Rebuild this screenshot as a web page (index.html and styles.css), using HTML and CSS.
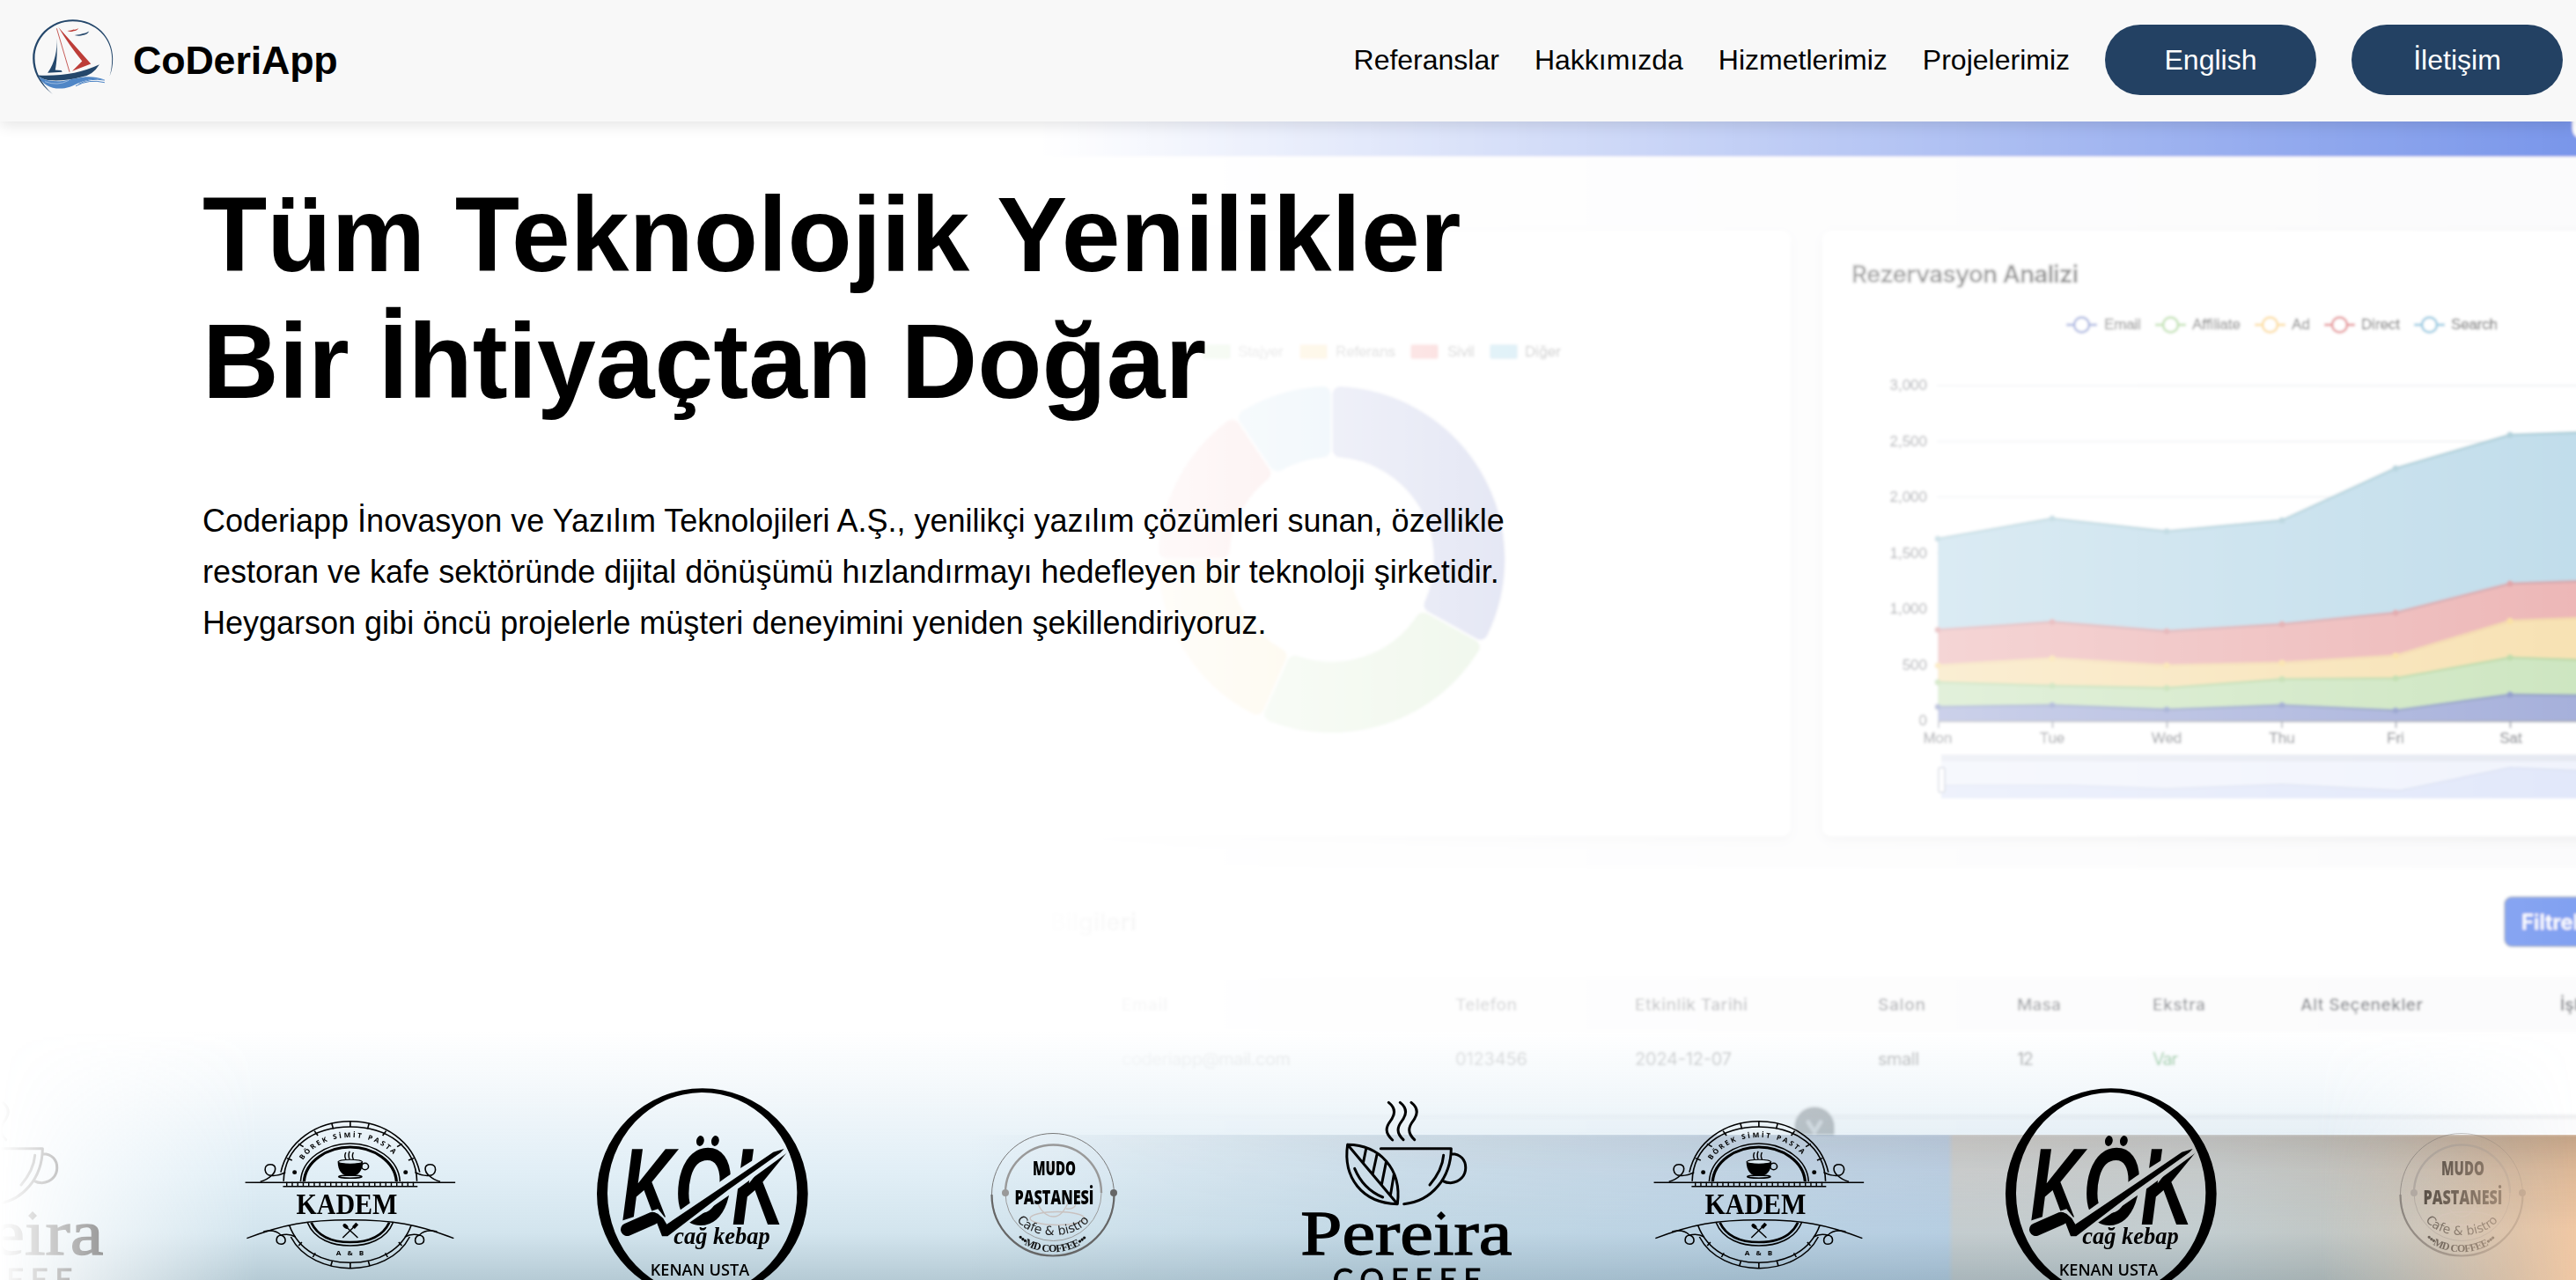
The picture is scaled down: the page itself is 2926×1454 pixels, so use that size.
FILE: index.html
```html
<!DOCTYPE html>
<html lang="tr">
<head>
<meta charset="utf-8">
<title>CoDeriApp</title>
<link rel="stylesheet" href="styles.css">
</head>
<body>
<header class="header">
  <a class="brand">
    <svg class="brand-logo" viewBox="0 0 282 262">
      <path d="M71 259C20 220 3 175 3 137C3 65 62 4 140 4C220 4 277 65 277 137C277 160 274 178 266 197C272 178 274 160 274 137C274 68 218 10 140 10C68 10 10 66 10 137C10 175 28 220 71 259Z" fill="#24476b"/>
      <path d="M86 68C86 110 80 150 54 186L104 183L101 178L80 176C86 150 87 110 86 68Z" fill="#24476b"/>
      <path d="M91 30L202 155L138 180L172 146Q128 92 91 30Z" fill="#bd3d38"/>
      <path d="M85 34L129 183" stroke="#bd3d38" stroke-width="2.5"/>
      <path d="M121 42Q136 42 143 38Q150 40 160 33Q153 43 143 43Q134 48 121 42Z" fill="#bd3d38"/>
      <path d="M146 57Q165 55 173 52Q183 52 196 44Q188 57 174 57Q162 62 146 57Z" fill="#24476b"/>
      <path d="M20 194Q140 200 231 157Q208 196 166 201Q110 216 55 211Q32 207 20 194Z" fill="#24476b"/>
      <path d="M24 200Q60 218 105 214C160 205 190 190 249 209C190 200 160 222 130 234C80 250 40 230 24 200Z" fill="#4f86c6"/>
      <path d="M150 231Q195 206 249 219M160 224Q200 202 249 211" fill="none" stroke="#4f86c6" stroke-width="3"/>
      <path d="M45 216Q88 232 126 212" fill="none" stroke="#e4edf6" stroke-width="1.5"/>
    </svg>
    <span class="brand-name">CoDeriApp</span>
  </a>
  <nav class="nav">
    <a>Referanslar</a>
    <a>Hakkımızda</a>
    <a>Hizmetlerimiz</a>
    <a>Projelerimiz</a>
    <a class="pill">English</a>
    <a class="pill">İletişim</a>
  </nav>
</header>

<main class="hero">
  <svg class="backdrop" viewBox="0 138 2926 1316" preserveAspectRatio="none">
    <defs>
      <linearGradient id="fade" gradientUnits="userSpaceOnUse" x1="1180" x2="2926" y1="0" y2="0">
        <stop offset="0" stop-color="#fff" stop-opacity="0"/>
        <stop offset="1" stop-color="#fff" stop-opacity=".7"/>
      </linearGradient>
      <mask id="fadeMask" maskUnits="userSpaceOnUse" x="0" y="138" width="2926" height="1316">
        <rect x="1180" y="138" width="1746" height="1316" fill="url(#fade)"/>
      </mask>
      <linearGradient id="photo" gradientUnits="userSpaceOnUse" x1="1100" x2="2926" y1="0" y2="0">
        <stop offset="0" stop-color="#e3e9ef" stop-opacity="0"/>
        <stop offset=".27" stop-color="#e6ecf2"/>
        <stop offset=".5" stop-color="#dbe3ef"/>
        <stop offset=".609" stop-color="#d6deed"/>
        <stop offset=".613" stop-color="#eadcd2"/>
        <stop offset=".77" stop-color="#e8ddd3"/>
        <stop offset=".88" stop-color="#e3d0be"/>
        <stop offset=".96" stop-color="#e8c7a9"/>
        <stop offset="1" stop-color="#f0c8a4"/>
      </linearGradient>
      <linearGradient id="shade" x1="0" x2="0" y1="0" y2="1">
        <stop offset="0" stop-color="#2b2320" stop-opacity=".32"/>
        <stop offset=".25" stop-color="#2b2320" stop-opacity=".13"/>
        <stop offset=".65" stop-color="#2b2320" stop-opacity="0"/>
      </linearGradient>
      <filter id="soft" filterUnits="userSpaceOnUse" x="1100" y="100" width="1900" height="1250"><feGaussianBlur stdDeviation="1.4"/></filter>
    </defs>
    <path d="M1100 1289H2926V1454H1100Z" fill="url(#photo)"/>
    <g mask="url(#fadeMask)">
      <rect x="1180" y="1289" width="1746" height="165" fill="url(#shade)"/>
      <g filter="url(#soft)">
        <rect x="1100" y="100" width="1900" height="1189" fill="#f9f9fa"/>
        <rect x="1100" y="100" width="1900" height="78" fill="#4169e1"/>
        <rect x="2922" y="110" width="60" height="48" rx="12" fill="#fff"/>
        <g class="card-shadow">
          <rect x="1100" y="262" width="934" height="688" rx="10" fill="#fff"/>
          <rect x="2070" y="262" width="930" height="688" rx="10" fill="#fff"/>
        </g>
        <rect x="1100" y="986" width="1900" height="281" fill="#fff"/>
        <g stroke-width="18" stroke-linejoin="round" transform="translate(-2 0)">
          <path d="M1524.3 447.8A188 188 0 0 1 1683.5 717.9L1628.3 687.1A125 125 0 0 0 1524.5 510.9Z" fill="#848fcd" stroke="#848fcd"/>
          <path d="M1673.9 735.1A188 188 0 0 1 1447.1 811L1473 753.4A125 125 0 0 0 1618.6 704.7Z" fill="#b8dba6" stroke="#b8dba6"/>
          <path d="M1429.1 803A188 188 0 0 1 1326.8 645.3L1389.9 645.5A125 125 0 0 0 1454.7 745.3Z" fill="#f7d588" stroke="#f7d588"/>
          <path d="M1326.8 625.7A188 188 0 0 1 1401.4 485.4L1436.5 537.8A125 125 0 0 0 1389.9 625.5Z" fill="#ec9090" stroke="#ec9090"/>
          <path d="M1417.7 474.3A188 188 0 0 1 1504.7 447.8L1504.5 510.9A125 125 0 0 0 1453.1 526.6Z" fill="#9ecbe5" stroke="#9ecbe5"/>
        </g>
        <rect x="1366" y="391" width="32" height="17" rx="3" fill="#91cc75"/>
        <rect x="1476" y="391" width="32" height="17" rx="3" fill="#fac858"/>
        <rect x="1602" y="391" width="32" height="17" rx="3" fill="#ee6666"/>
        <rect x="1692" y="391" width="32" height="17" rx="3" fill="#73c0de"/>
        <g class="chart-text">
          <text x="1406" y="405" textLength="52">Stajyer</text>
          <text x="1517" y="405" textLength="68">Referans</text>
          <text x="1644" y="405" textLength="31">Sivil</text>
          <text x="1732" y="405" textLength="41">Diğer</text>
        </g>

        <text class="card-title" x="2103" y="321" textLength="258">Rezervasyon Analizi</text>
        <g fill="#fff" stroke-width="3">
          <path d="M2347 369h35" stroke="#5470c6"/><circle cx="2364.5" cy="369" r="8.5" stroke="#5470c6"/>
          <path d="M2448 369h35" stroke="#91cc75"/><circle cx="2465.5" cy="369" r="8.5" stroke="#91cc75"/>
          <path d="M2561 369h35" stroke="#fac858"/><circle cx="2578.5" cy="369" r="8.5" stroke="#fac858"/>
          <path d="M2640 369h35" stroke="#d84f55"/><circle cx="2657.5" cy="369" r="8.5" stroke="#d84f55"/>
          <path d="M2742 369h35" stroke="#62b2d4"/><circle cx="2759.5" cy="369" r="8.5" stroke="#62b2d4"/>
        </g>
        <g class="chart-text">
          <text x="2390" y="374" textLength="42">Email</text>
          <text x="2490" y="374" textLength="55">Affiliate</text>
          <text x="2603" y="374" textLength="21">Ad</text>
          <text x="2682" y="374" textLength="44">Direct</text>
          <text x="2784" y="374" textLength="53">Search</text>
        </g>
        <path d="M2200 438H2940M2200 501.500H2940M2200 564.500H2940M2200 628H2940" stroke="#e9ebf0" stroke-width="2"/>
        <g class="axis-text axis-y">
          <text x="2189" y="443">3,000</text>
          <text x="2189" y="507">2,500</text>
          <text x="2189" y="570">2,000</text>
          <text x="2189" y="634">1,500</text>
          <text x="2189" y="697">1,000</text>
          <text x="2189" y="761">500</text>
          <text x="2189" y="824">0</text>
        </g>
        <g stroke-width="3">
          <path d="M2201 819V612L2331 589L2461 603.500L2592 591L2721 532L2851 494L2940 491V819Z" fill="#a6cee2"/>
          <path d="M2201 612L2331 589L2461 603.500L2592 591L2721 532L2851 494L2940 491" fill="none" stroke="#8dbccb"/>
          <path d="M2201 819V715.500L2331 706.500L2461 717L2592 709L2721 696L2851 663L2940 660V819Z" fill="#e59898"/>
          <path d="M2201 715.500L2331 706.500L2461 717L2592 709L2721 696L2851 663L2940 660" fill="none" stroke="#c4848c"/>
          <path d="M2201 819V756L2331 748L2461 756L2592 753L2721 745L2851 705.500L2940 702V819Z" fill="#f4d593"/>
          <path d="M2201 756L2331 748L2461 756L2592 753L2721 745L2851 705.500L2940 702" fill="none" stroke="#efc98a"/>
          <path d="M2201 819V775L2331 779L2461 781.600L2592 771.500L2721 770.600L2851 747L2940 750V819Z" fill="#b8dba6"/>
          <path d="M2201 775L2331 779L2461 781.600L2592 771.500L2721 770.600L2851 747L2940 750" fill="none" stroke="#a5cb87"/>
          <path d="M2201 819V803L2331 801L2461 806L2592 801L2721 807L2851 789L2940 790V819Z" fill="#808ecb"/>
          <path d="M2201 803L2331 801L2461 806L2592 801L2721 807L2851 789L2940 790" fill="none" stroke="#6a7fae"/>
        </g>
        <g fill="none">
          <path d="M2201 612h.1M2331 589h.1M2461 603.500h.1M2592 591h.1M2721 532h.1M2851 494h.1" stroke="#8dbccb" class="dots"/>
          <path d="M2201 715.500h.1M2331 706.500h.1M2461 717h.1M2592 709h.1M2721 696h.1M2851 663h.1" stroke="#d07a80" class="dots"/>
          <path d="M2201 756h.1M2331 748h.1M2461 756h.1M2592 753h.1M2721 745h.1M2851 705.500h.1" stroke="#f7d27a" class="dots"/>
          <path d="M2201 775h.1M2331 779h.1M2461 781.600h.1M2592 771.500h.1M2721 770.600h.1M2851 747h.1" stroke="#a0cc84" class="dots"/>
          <path d="M2201 803h.1M2331 801h.1M2461 806h.1M2592 801h.1M2721 807h.1M2851 789h.1" stroke="#6274b4" class="dots"/>
        </g>
        <path d="M2201 819.500H2940M2202 819v8M2331.500 819v8M2461.500 819v8M2592 819v8M2721.500 819v8M2851.500 819v8" stroke="#7f8496" stroke-width="2"/>
        <g class="axis-text axis-x">
          <text x="2201" y="844">Mon</text>
          <text x="2331" y="844">Tue</text>
          <text x="2461" y="844">Wed</text>
          <text x="2592" y="844">Thu</text>
          <text x="2721" y="844">Fri</text>
          <text x="2852" y="844">Sat</text>
        </g>
        <rect x="2205" y="857" width="740" height="50" fill="#eaeefb"/>
        <rect x="2205" y="857" width="740" height="8" fill="#dbe0ec"/>
        <path d="M2205 907V892L2350 892L2461 896L2592 891L2726 898L2851 872L2940 876V907Z" fill="#d5def8"/>
        <path d="M2205 892L2350 892L2461 896L2592 891L2726 898L2851 872L2940 876" fill="none" stroke="#cdd6ee" stroke-width="2"/>
        <rect x="2202" y="872" width="7" height="28" rx="2" fill="#fff" stroke="#b5bccf" stroke-width="2"/>

        <text class="card-title" x="1291" y="1057" text-anchor="end">Rezervasyon Bilgileri</text>
        <rect x="2845" y="1019" width="120" height="56" rx="8" fill="#4b78eb"/>
        <rect x="2845" y="1019" width="120" height="56" rx="8" fill="none" stroke="#6886b8" stroke-width="2"/>
        <text class="button-text" x="2864" y="1056">Filtrele</text>
        <rect x="1100" y="1110" width="1900" height="62" fill="#f9f9fa"/>
        <g class="table-head">
          <text x="1274" y="1148" textLength="52">Email</text>
          <text x="1653" y="1148" textLength="70">Telefon</text>
          <text x="1857" y="1148" textLength="128">Etkinlik Tarihi</text>
          <text x="2133" y="1148" textLength="54">Salon</text>
          <text x="2291" y="1148" textLength="50">Masa</text>
          <text x="2445" y="1148" textLength="60">Ekstra</text>
          <text x="2613" y="1148" textLength="139">Alt Seçenekler</text>
          <text x="2908" y="1148">İşlem</text>
        </g>
        <g class="table-cell">
          <text x="1274" y="1210" textLength="192">coderiapp@mail.com</text>
          <text x="1653" y="1210" textLength="82">0123456</text>
          <text x="1857" y="1210" textLength="110">2024-12-07</text>
          <text x="2133" y="1210" textLength="47">small</text>
          <text x="2291" y="1210" textLength="19">12</text>
          <text x="2445" y="1210" textLength="29" class="yes">Var</text>
        </g>
        <rect x="1100" y="1266" width="1900" height="5" fill="#e9e9eb"/>
        <path d="M2038 1289V1280A23 23 0 0 1 2084 1280V1289Z" fill="#4f5357"/>
        <path d="M2053 1273L2061 1286L2069 1273" fill="none" stroke="#a5a9ad" stroke-width="4"/>
      </g>
    </g>
  </svg>

  <section class="intro">
    <h1>Tüm Teknolojik Yenilikler<br>Bir İhtiyaçtan Doğar</h1>
    <p>Coderiapp İnovasyon ve Yazılım Teknolojileri A.Ş., yenilikçi yazılım çözümleri sunan, özellikle<br>restoran ve kafe sektöründe dijital dönüşümü hızlandırmayı hedefleyen bir teknoloji şirketidir.<br>Heygarson gibi öncü projelerle müşteri deneyimini yeniden şekillendiriyoruz.</p>
  </section>

  <section class="marquee">
    <div class="track">
      <svg class="client" viewBox="0 0 240 240"><use href="#pereira"/></svg>
      <svg class="client" viewBox="0 0 240 240"><use href="#kadem"/></svg>
      <svg class="client" viewBox="0 0 240 240"><use href="#kok"/></svg>
      <svg class="client" viewBox="0 0 240 240"><use href="#mudo"/></svg>
      <svg class="client" viewBox="0 0 240 240">
        <g id="pereira" transform="translate(-18 -2) scale(.33333)">
          <g fill="none" stroke="#000" stroke-width="9" stroke-linecap="round" stroke-linejoin="round">
            <path d="M352 55C378 75 374 97 358 118S338 158 365 183M391 55C417 75 413 97 397 118S377 158 402 182M429 55C455 75 451 97 435 118S415 158 440 182"/>
            <path d="M325 212H565C564 310 500 392 404 401M565 230C630 228 632 325 563 329Q548 329 536 322M539 235Q535 285 492 336"/>
            <path d="M212 199C320 200 398 280 382 401C260 398 196 310 212 199ZL382 401M275 213L265 262M312 233L298 297M343 260L328 335M370 300L358 372M236 280Q265 350 332 378"/>
          </g>
          <text class="pereira-name" x="52" y="573" textLength="720" lengthAdjust="spacingAndGlyphs">Pere<tspan>ı</tspan>ra</text>
          <path d="M531 426L546 441L531 456L516 441Z"/>
          <text class="pereira-sub" x="162" y="697" textLength="505">COFFEE</text>
        </g>
      </svg>
      <svg class="client" viewBox="0 0 240 240">
        <g id="kadem" transform="translate(-278 -86) scale(.35714 .33333)">
          <g fill="none" stroke="#000" stroke-width="4.500">
            <path d="M893 545C915 440 1005 371 1114 371S1313 440 1335 545M902 575C905 455 1000 390 1114 390S1323 455 1326 575"/>
            <path d="M1114 370v20M1055 378l5 19M1174 378l-5 19M1000 404l11 16M1228 404l-11 16M949 448l16 10M1279 448l-16 10M912 497l17 7M1316 497l-17 7"/>
            <path d="M956 576C960 500 1035 447 1114 447S1268 500 1272 576"/>
            <path d="M967 576C972 508 1040 459 1114 459S1256 508 1261 576" stroke-width="9"/>
            <path d="M780 580H1448M900 593H1328"/>
            <path d="M910 585H1320" stroke-width="14" stroke-dasharray="4 13.500"/>
            <path d="M828 577Q848 572 864 556C838 556 836 518 859 518C880 518 880 540 864 556Q885 558 908 545M1400 577Q1380 572 1364 556C1390 556 1392 518 1369 518C1348 518 1348 540 1364 556Q1343 558 1320 545"/>
            <path d="M785 770C900 722 980 707 1114 707S1330 722 1443 770M920 725C950 812 1025 853 1114 853S1278 812 1308 725M925 765C960 838 1040 872 1114 872S1268 838 1303 765"/>
            <path d="M978 716C1000 775 1060 795 1114 795S1228 775 1250 716"/>
            <path d="M990 716C1012 766 1060 783 1114 783S1216 766 1238 716" stroke-width="8"/>
            <path d="M1114 853v19M1057 847l-5 17M1171 847l5 17M1003 820l-8 14M1225 820l8 14M960 783l-10 12M1268 783l10 12"/>
            <path d="M838 747Q875 738 893 759C876 762 874 790 894 790C912 790 912 765 893 759Q920 752 940 765M1390 747Q1352 738 1334 759C1352 762 1354 790 1334 790C1316 790 1316 765 1334 759Q1308 752 1288 765"/>
            <path d="M1100 501q-6-12 0-24M1112 501q-6-14 0-28M1124 501q-6-12 0-24" stroke-width="4"/>
            <circle cx="1161" cy="525" r="11"/>
            <ellipse cx="1114" cy="560" rx="37" ry="5"/>
            <path d="M1090 768L1134 722M1138 768L1096 726" stroke-width="4"/>
          </g>
          <path d="M1074 508H1154C1153 542 1140 558 1114 558S1075 542 1074 508Z"/>
          <ellipse cx="1114" cy="509" rx="38" ry="7.500" fill="#dbe8f0" stroke="#000" stroke-width="3"/>
          <ellipse cx="1099" cy="729" rx="6" ry="10" transform="rotate(-45 1099 729)"/>
          <path d="M1120 730L1132 716L1140 724L1128 738Z"/>
          <circle cx="937" cy="545" r="7"/><circle cx="1290" cy="545" r="7"/>
          <path id="kademArc" d="M962 506C1000 447 1058 426 1114 426S1228 447 1268 506" fill="none"/>
          <text class="kadem-arc"><textPath href="#kademArc" textLength="330" startOffset="3">BÖREK SİMİT PASTA</textPath></text>
          <text class="kadem-name" x="942" y="687" textLength="322" lengthAdjust="spacingAndGlyphs">KADEM</text>
          <text class="kadem-arc" x="1069" y="829" textLength="88">A &amp; B</text>
        </g>
      </svg>
      <svg class="client" viewBox="0 0 240 240">
        <mask id="skewerCut" maskUnits="userSpaceOnUse" x="0" y="0" width="900" height="720">
          <rect width="900" height="720" fill="#fff"/>
          <path d="M120 494L262 448L285 476L340 450L500 336L690 216L730 236L500 404L350 508L250 600L100 600Z" fill="#000"/>
        </mask>
        <g id="kok" transform="translate(-18 -12) scale(.33333)">
          <path fill-rule="evenodd" d="M54 396A359 359 0 0 1 773 396A359 359 0 0 1 54 396ZM90 396A323 346 0 0 0 736 390A323 342 0 0 0 90 396Z"/>
          <g mask="url(#skewerCut)">
            <text class="kok-name" x="136" y="500" textLength="560" lengthAdjust="spacingAndGlyphs">KOK</text>
          </g>
          <ellipse cx="406" cy="216" rx="13" ry="18" transform="rotate(12 406 216)"/>
          <ellipse cx="457" cy="216" rx="13" ry="18" transform="rotate(12 457 216)"/>
          <path d="M157 518L244 480" stroke="#000" stroke-width="44" stroke-linecap="round"/>
          <path d="M240 458L262 464L280 480L292 500L500 360L655 254L692 243L680 256L500 384L295 541L276 541L258 494Z"/>
          <text class="kok-script" x="316" y="567" textLength="328" lengthAdjust="spacingAndGlyphs">cağ kebap</text>
          <text class="kok-owner" x="236" y="674" textLength="338" lengthAdjust="spacingAndGlyphs">KENAN USTA</text>
        </g>
      </svg>
      <svg class="client" viewBox="0 0 240 240">
        <g id="mudo">
          <g fill="none">
            <circle cx="118" cy="121" r="69.500" stroke="#777" stroke-width="1"/>
            <path d="M48.500 121A69.500 69.500 0 0 0 187.500 121" stroke="#666" stroke-width="2.200"/>
            <path d="M64 119A54.500 54.500 0 0 1 173 119" stroke="#999" stroke-width="2.400"/>
            <path d="M173 119A54.500 54.500 0 0 1 64 119" stroke="#999" stroke-width="1"/>
            <path d="M118 98q-6-6 0-16M123 98q-6-8-1-14M101 132Q108 146 119 146Q129 146 136 128M133 137Q142 138 144 132" stroke="#c9c2c0" stroke-width="1.300"/>
            <ellipse cx="123" cy="148" rx="31" ry="7.500" stroke="#c9c2c0" stroke-width="1.500"/>
            <path id="mudoArc1" d="M77 150C91 172 145 174 161 148"/>
            <path id="mudoArc2" d="M77 171C98 191 137 192 160 170"/>
          </g>
          <circle cx="64" cy="119" r="4" fill="#999"/>
          <circle cx="187" cy="119" r="4" fill="#666"/>
          <text class="mudo-name" x="95" y="99" textLength="49" lengthAdjust="spacingAndGlyphs">MUDO</text>
          <text class="mudo-name" x="74.500" y="131.500" textLength="90" lengthAdjust="spacingAndGlyphs">PASTANESİ</text>
          <text class="mudo-bistro"><textPath href="#mudoArc1" textLength="92">Cafe &amp; bistro</textPath></text>
          <text class="mudo-coffee"><textPath href="#mudoArc2" textLength="88">•••MD COFFEE•••</textPath></text>
        </g>
      </svg>
    </div>
  </section>
</main>
</body>
</html>
```
FILE: styles.css
```css
* { box-sizing: border-box; }

body {
  margin: 0;
  height: 1454px;
  display: flex;
  flex-direction: column;
  overflow: hidden;
  background: #fff;
  color: #000;
  font-family: "Liberation Sans", Arial, sans-serif;
}

.header {
  position: relative;
  z-index: 2;
  flex: none;
  height: 138px;
  padding: 0 15px 2px 36px;
  display: flex;
  align-items: center;
  justify-content: space-between;
  background: #f8f8f8;
  box-shadow: 0 4px 16px rgba(0, 0, 0, .11);
}

.brand { display: flex; align-items: center; gap: 21px; }
.brand-logo { width: 94px; height: 87px; margin-bottom: 8px; }
.brand-name { font-size: 44.8px; font-weight: 700; letter-spacing: -.15px; }

.nav { display: flex; align-items: center; gap: 40px; font-size: 32px; }
.pill {
  width: 240px;
  height: 80px;
  border-radius: 40px;
  display: flex;
  align-items: center;
  justify-content: center;
  background: #234163;
  color: #fff;
}

.hero {
  position: relative;
  flex: 1;
  display: flex;
  flex-direction: column;
  justify-content: space-between;
  overflow: hidden;
}

.backdrop { position: absolute; inset: 0; width: 100%; height: 100%; }

.card-shadow { filter: drop-shadow(0 4px 6px rgba(0, 0, 0, .07)); }
.chart-text { font-size: 17px; fill: #111; stroke: #111; stroke-width: .3px; }
.axis-text { font-size: 17px; fill: #444955; stroke: #444955; stroke-width: .3px; }
.axis-y { text-anchor: end; }
.axis-x { text-anchor: middle; }
.card-title { font: 600 27.5px "Inter", sans-serif; fill: #000; stroke: #000; stroke-width: .5px; }
.button-text { font: 600 24px "Inter", sans-serif; fill: #fff; }
.table-head { font: 600 19px "Inter", sans-serif; fill: #2a303d; }
.table-cell { font: 400 20px "Inter", sans-serif; fill: #111; }
.yes { fill: #1fa33c; }
.dots { stroke-width: 7px; stroke-linecap: round; }

.intro { position: relative; padding: 56px 230px 0; }
.intro h1 {
  margin: 0;
  font-size: 120px;
  line-height: 144px;
  font-weight: 700;
}
.intro p {
  margin: 81px 0 0;
  font-size: 36px;
  line-height: 58px;
}

.marquee {
  position: relative;
  height: 284px;
  padding-top: 66px;
  overflow: hidden;
  background: linear-gradient(to bottom,
    rgba(120, 180, 215, 0) 0,
    rgba(120, 175, 210, .1) 80px,
    rgba(120, 180, 215, .22) 160px,
    rgba(112, 170, 200, .31) 230px,
    rgba(80, 130, 155, .42) 284px);
  -webkit-mask-image: linear-gradient(to right, transparent, #000 10%, #000 90%, transparent);
  mask-image: linear-gradient(to right, transparent, #000 10%, #000 90%, transparent);
}

.track { display: flex; gap: 160px; margin-left: -122px; width: max-content; }
.client { flex: none; width: 240px; height: 240px; overflow: visible; }

.pereira-name { font: 400 216px "Liberation Serif", serif; stroke: #000; stroke-width: 4px; }
.pereira-sub { font: 400 103px "Lato", sans-serif; stroke: #000; stroke-width: 3px; }
.kadem-name { font: 700 104px "Liberation Serif", serif; }
.kadem-arc { font: 700 23px "Open Sans", sans-serif; }
.kok-name { font: italic 700 372px "Liberation Sans", sans-serif; }
.kok-script { font: italic 700 84px "Liberation Serif", serif; }
.kok-owner { font: 600 55px "Open Sans", sans-serif; }
.mudo-name { font: 800 22px "Open Sans", sans-serif; }
.mudo-bistro { font: 400 14px "DejaVu Sans", sans-serif; fill: #222; }
.mudo-coffee { font: 700 12px "Liberation Serif", serif; fill: #111; }
```
